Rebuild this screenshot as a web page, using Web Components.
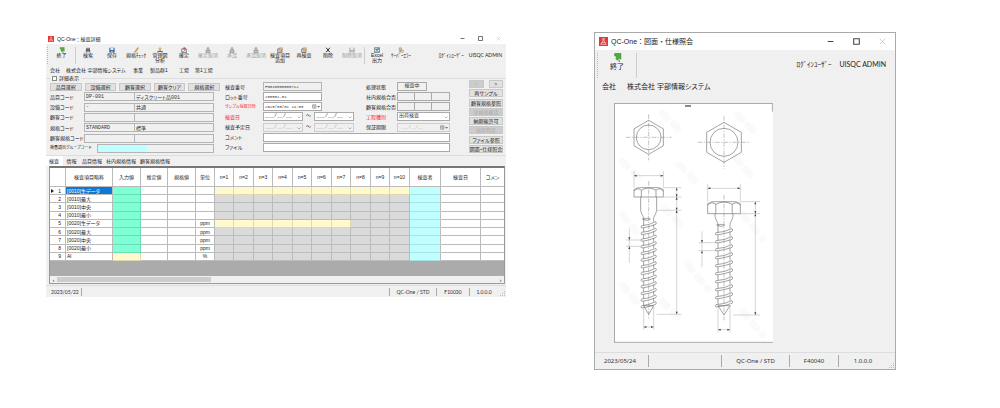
<!DOCTYPE html>
<html lang="ja">
<head>
<meta charset="utf-8">
<title>QC-One</title>
<style>
body{margin:0;background:#fff;color:#222;font-family:"Liberation Sans","Noto Sans CJK JP",sans-serif;font-feature-settings:"palt"}
</style>
</head>
<body>
<qc-desktop></qc-desktop>
<script>
const define=(name,html,setup)=>customElements.define(name,class extends HTMLElement{
  connectedCallback(){
    if(this.shadowRoot)return;
    const root=this.attachShadow({mode:'open'});
    const t=document.createElement('template');
    t.innerHTML=typeof html==='function'?html(this):html;
    root.append(t.content.cloneNode(true));
    if(setup)setup(this,root);
  }
});

/* Icons used on the tool bars, all on a 16 x 16 box */
const ICONS={
  exit:'<path d="M3 1h11v10l-3-2-3 4-3-3 2-3-4-2z" fill="#4cae3c" stroke="#2f7d28"/><path d="M11 12v4" stroke="#777" stroke-width="2"/>',
  find:'<path d="M4 2h3v4h2V2h3l2 8v4H9v-4H7v4H2v-4z" fill="#555"/><path d="M4 11h2M10 11h2" stroke="#ddd" stroke-width="2"/>',
  save:'<path d="M1 2h14v13H1z" fill="#3c5fa8"/><path d="M4 2h8v6H4z" fill="#e8eef8"/><path d="M5 11h6v4H5z" fill="#bbb"/>',
  check:'<path d="M13 1l2 2-7 9-3 1 1-3z" fill="#e5a63a" stroke="#a86b22"/><path d="M2 14h11" stroke="#888"/>',
  chart:'<path d="M8 1l4 4-4 4-4-4z" fill="#eec36c" stroke="#96723a"/><path d="M8 9v3M2 15v-3h12v3" fill="none" stroke="#333" stroke-width="2"/>',
  confirm:'<path d="M2 5h12v10H2z" fill="#fff" stroke="#555" stroke-width="2"/><circle cx="9" cy="4" r="3.500" fill="#df4b42"/><path d="M4 10l3 3 5-6" fill="none" stroke="#46689d" stroke-width="2"/>',
  stamp:'<circle cx="8" cy="4" r="3" fill="#bbb" stroke="#888"/><path d="M3 8h10v7H3z" fill="#c8c8c8" stroke="#888" stroke-width="2"/>',
  item:'<path d="M2 5h11v10H2z" fill="#eee" stroke="#555" stroke-width="2"/><path d="M6 2h8v6H6z" fill="#ebb765" stroke="#a67730"/><path d="M5 11h6" stroke="#4a719c" stroke-width="2"/>',
  del:'<path d="M3 2l10 12M13 2L3 14" stroke="#222" stroke-width="2.500"/>',
  saveoff:'<path d="M1 2h14v13H1z" fill="#aaa"/><path d="M4 2h8v6H4z" fill="#eee"/><path d="M5 11h6v4H5z" fill="#ddd"/>',
  excel:'<path d="M1 2h14v13H1z" fill="#eaf2ee" stroke="#567" stroke-width="2"/><path d="M4 5l8 7M12 5l-8 7" stroke="#258b55" stroke-width="3"/><path d="M9 2h6v5H9z" fill="#5b9bc7"/>',
  error:'<path d="M3 2h6v7H3z" fill="#e6c27c" stroke="#8b7650"/><path d="M7 8h7v6H7z" fill="#ddd" stroke="#666"/><path d="M3 14l4-4" stroke="#666" stroke-width="2"/>'
};

define('qc-icon',el=>`<style>:host{display:block;width:1em;height:1em}svg{display:block;width:100%;height:100%}</style>
<svg viewBox="0 0 16 16" aria-hidden="true">${ICONS[el.getAttribute('name')]}</svg>`);

define('tool-item',el=>`<style>
:host{display:block;flex:0 0 var(--tool-w,24px);min-width:0}
button{display:flex;flex-direction:column;align-items:center;width:100%;border:0;padding:0;background:none;font:inherit;font-feature-settings:inherit;color:inherit;white-space:nowrap}
button:disabled{color:#999}
qc-icon{font-size:var(--icon,6px)}
span{display:block;line-height:var(--tool-lh,5px);text-align:center}
</style><button type="button" ${el.hasAttribute('off')?'disabled':''}><qc-icon name="${el.getAttribute('icon')}"></qc-icon><span><slot></slot></span></button>`);

define('app-window',el=>`<style>
:host{display:flex;flex-direction:column;min-width:0;background:#f0f0f0;font-size:var(--fs);line-height:var(--lh)}
header{display:flex;align-items:center;height:var(--title-h);background:#fff;padding:0 var(--pad-end) 0 var(--pad)}
.logo{width:var(--logo);height:var(--logo);margin-right:3px;display:block}
h1{font:inherit;font-feature-settings:normal;margin:0;flex:1;white-space:nowrap}
nav{display:flex;gap:var(--ctl-gap)}
nav button{border:0;background:none;padding:0;width:var(--ctl);height:var(--ctl);color:#444}
nav button:last-child{color:#bbb}
nav svg{display:block;width:100%;height:100%}
</style>
<header>
<svg class="logo" viewBox="0 0 16 16"><path d="M0 0h16v16H0z" fill="#e5383b"/><path d="M6 3h4M7 3v4l-4 6h10L9 7V3M5 10h6" fill="none" stroke="#fff" stroke-width="1"/></svg>
<h1>${el.getAttribute('heading')}</h1>
<nav>
<button type="button" aria-label="最小化"><svg viewBox="0 0 10 10"><path d="M1 5h8" stroke="currentColor" stroke-width="1.500"/></svg></button>
<button type="button" aria-label="最大化"><svg viewBox="0 0 10 10"><path d="M1 1h8v8H1z" fill="none" stroke="currentColor" stroke-width="1.500"/></svg></button>
<button type="button" aria-label="閉じる"><svg viewBox="0 0 10 10"><path d="M1 1l8 8M9 1L1 9" stroke="currentColor"/></svg></button>
</nav></header><slot></slot>`);

define('tool-bar',`<style>
:host{display:flex;align-items:flex-start;padding:3px 4px 0 1px;box-sizing:border-box;white-space:nowrap}
.grip{width:0;height:var(--sep-h);border-left:1px dotted #bbb;flex:none}
.user{margin-left:auto;display:flex;gap:var(--user-gap);align-self:flex-start;padding-top:var(--user-top);font-family:Lato,"Noto Sans CJK JP",sans-serif}
</style><i class="grip"></i><slot></slot><div class="user"><span>ﾛｸﾞｲﾝﾕｰｻﾞｰ</span><span>UISQC ADMIN</span></div>`);

define('tool-sep',`<style>:host{display:block;flex:none;width:0;height:var(--sep-h);border-left:1px solid #ccc}</style>`);

define('status-bar',el=>`<style>
:host{display:grid;align-items:center;border-top:1px solid #ddd;box-sizing:border-box;white-space:nowrap;color:#333}
span{height:var(--status-h);line-height:var(--status-h);border-left:1px solid #aaa;box-sizing:border-box;text-align:center}
span:first-of-type{border:0;text-align:left;padding-left:var(--status-pad)}
svg{align-self:end;justify-self:end}
</style>${el.getAttribute('items').split('|').map(t=>`<span>${t}</span>`).join('')}<svg width="6" height="6" viewBox="0 0 6 6"><path d="M4 0h1v1H4zM4 2h1v1H4zM2 2h1v1H2zM4 4h1v1H4zM2 4h1v1H2zM0 4h1v1H0z" fill="#bbb"/></svg>`);

const chev='<svg viewBox="0 0 8 8" aria-hidden="true"><path d="M1 3l3 3 3-3" fill="none" stroke="#777"/></svg>';
const cal='<svg class="cal" viewBox="0 0 14 8" aria-hidden="true"><path d="M1 1h6v6H1zM1 3h6M4 3v4" fill="none" stroke="#777"/><path d="M9 3h5l-2.500 3z" fill="#666"/></svg>';
const row=(id,label,a,b)=>`<div class="row"><label for="${id}">${label}</label><input id="${id}" class="flat" value="${a}"><input class="flat name" aria-label="${label}名" value="${b}"></div>`;
const pick=(id,off)=>`<span class="pick"><select id="${id}" aria-label="${id}" ${off?'disabled':''}><option>___/__/__</option></select>${chev}</span>`;

define('inspect-form',`<style>
:host{display:block;position:relative;border-top:1px solid #ddd;border-bottom:1px solid #ddd;padding:1px 3px 2px 4px}
*{box-sizing:border-box}
.legend{position:absolute;left:4px;top:-4px;display:flex;align-items:center;gap:2px;background:#f0f0f0;padding:0 2px}
.legend input{appearance:none;width:5px;height:5px;margin:0;border:1px solid #888;background:#fff}
.cols{display:grid;grid-template-columns:170fr 5fr 225fr 19fr 34fr;height:73px}
.cols>div{display:grid;min-width:0;align-content:space-between}
.left{padding:3px 0 0}
.mid{padding:2px 0 1px}
.mid{grid-column:3;grid-template-columns:38fr 91fr 12fr 31fr 53fr;align-items:center;grid-auto-rows:9px}
.mid>*{min-width:0}
.side{grid-column:5}
.btns{display:flex;gap:3px}
button{flex:1;height:8px;border:1px solid #c8c8c8;background:#e1e1e1;padding:0;font:inherit;font-feature-settings:inherit;line-height:6px;color:#222;white-space:nowrap;min-width:0;display:flex;justify-content:center;align-items:center}
button:disabled{color:#aaa;background:#ccc}
.row{display:grid;grid-template-columns:34fr 51fr 79fr;align-items:center;margin-right:6px}
.row>*{min-width:0}
.row.group{grid-template-columns:47fr 117fr}
.group span{display:flex;border:1px solid #b4b4b4}
.group input{width:43%;border:0;background:#c0ffff;height:7px}
label{white-space:nowrap}
.long{font-size:4px}
.red{color:#f22}
input,select,output{display:block;width:100%;min-width:0;height:9px;margin:0;padding:0 1px;border:1px solid #aaa;border-radius:0;background:#fff;color:#333;font:4px/7px "Liberation Mono","Noto Sans CJK JP",monospace;font-feature-settings:"palt";appearance:none}
.row input{font-size:5px}
.flat{background:#f0f0f0;border-color:#b4b4b4}
.name{border-left:0}
.half{width:65%}
.c4{grid-column:4}
.wide{grid-column:2/-1}
.pair{display:grid;grid-template-columns:40fr 11fr 40fr;text-align:center}
.pick{position:relative;display:block}
.pick svg{position:absolute;right:2px;top:3px;width:4px;height:4px}
.pick .cal{width:8px;height:5px;top:2px}
select{font-size:5px}
select:disabled,input:disabled{background:#f0f0f0;border-color:#ccc;color:#aaa;opacity:1}
.trio{display:grid;grid-template-columns:1fr 1fr 1fr}
output{background:#f0f0f0;text-align:center}
.trio output+output{border-left:0}
.state{width:57%;font-size:5px}
.pages{display:flex;gap:5px}
</style>
<div class="legend"><input type="checkbox" id="detail"><label for="detail">詳細表示</label></div>
<div class="cols">
<div class="left">
<div class="btns"><button type="button">品目選択</button><button type="button">設備選択</button><button type="button">顧客選択</button><button type="button">顧客クリア</button><button type="button">規格選択</button></div>
${row('item','品目コード','DP-001','ディスクリート品001')}
${row('equip','設備コード','-','共通')}
${row('cust','顧客コード','','')}
${row('spec','規格コード','STANDARD','標準')}
${row('cspec','顧客規格コード','','')}
<div class="row group"><label class="long" for="grp">検査項目グループコード</label><span><input id="grp"></span></div>
</div>
<div class="mid">
<label for="no">検査番号</label><input id="no" class="half flat" value="F0010000000712"><span class="c4">処理状態</span><output class="state">検査中</output>
<label for="lot">ロット番号</label><input id="lot" class="half" value="200501-01"><span class="c4">社内規格合否</span><span class="trio"><output></output><output></output><output></output></span>
<label for="sample" class="red long">サンプル採取日時</label><span class="pick half"><input id="sample" value="2020/05/01 14:00">${cal}</span><span class="c4">顧客規格合否</span><span class="trio"><output></output><output></output><output></output></span>
<label for="検査日開始" class="red">検査日</label><span class="pair">${pick('検査日開始')}<span>～</span>${pick('検査日終了')}</span><label for="kind" class="c4 red">工程種別</label><span class="pick"><select id="kind"><option>出荷検査</option></select>${chev}</span>
<label for="予定日開始">検査予定日</label><span class="pair">${pick('予定日開始',1)}<span>～</span>${pick('予定日終了',1)}</span><label for="limit" class="c4">保証期限</label><span class="pick"><input id="limit" disabled value=" ___/__/__">${cal}</span>
<label for="comment">コメント</label><input id="comment" class="wide">
<label for="file">ファイル</label><input id="file" class="wide">
</div>
<div class="side">
<div class="pages"><button type="button" disabled>&lt;</button><button type="button">&gt;</button></div>
<button type="button">再サンプル</button><button type="button">顧客規格参照</button><button type="button" disabled>全規格確認</button><button type="button">納期後許可</button><button type="button" disabled>出荷判定</button><button type="button">ファイル参照</button><button type="button">図面・仕様照会</button>
</div>
</div>`);

define('tab-strip',el=>`<style>
:host{display:flex;height:10px;line-height:9px;white-space:nowrap}
button{border:0;padding:0 2px;min-width:17px;background:none;font:inherit;font-feature-settings:inherit;color:#222}
button[aria-selected=true]{background:#fff;padding:0 4px 0 3px}
</style>${el.getAttribute('tabs').split('|').map((t,i)=>`<button type="button" role="tab" aria-selected="${!i}">${t}</button>`).join('')}`);

const WIDTHS=[16,47,28,27,28,19,19,20,19,20,19,20,19,20,19,20,31,40,24];
const HEADS=['','検査項目略称','入力値','推定値','規格値','単位',...Array.from({length:10},(_,i)=>'n='+(i+1)),'検査者','検査日','コメン'];
const NAMES=['[0010]生データ','[0010]最大','[0010]中央','[0010]最小','[0020]生データ','[0020]最大','[0020]中央','[0020]最小','Al'];
define('data-grid',()=>`<style>
:host{display:block;border:1px solid #999;border-top:2px solid #777;background:#ababab;margin:0 1px 0 3px;overflow:hidden}
table{width:100%;height:93px;table-layout:fixed;border-collapse:separate;border-spacing:0;background:#fff}
th,td{padding:0;border:solid #bbb;border-width:0 1px 1px 0;box-sizing:border-box;font-weight:400;line-height:6px;height:8px;white-space:nowrap;overflow:hidden;text-align:center}
thead th{height:19px}
tbody th{text-align:right;padding-right:4px}
svg{width:3px;height:4px;margin-right:4px}
td:nth-child(2){text-align:left;padding-left:1px}
.sel{background:#0f78d4;color:#fff}
.g{background:#7fffd4;border-color:#6fdcb8}.y{background:#fffacd;border-color:#ddd8b0}.d{background:#dadada}.c{background:#c0ffff;border-bottom-color:#a8e4e4}
.void{height:15px}
.bar{display:flex;align-items:center;height:7px;background:#f0f0f0}
.bar i{display:block;width:34%;height:5px;background:#cdcdcd}
.bar b{width:7px;text-align:center;font-weight:400;line-height:6px}
.bar b:last-child{margin-left:auto}
</style><table><colgroup>${WIDTHS.map(w=>`<col style="width:${w}px">`).join('')}</colgroup>
<thead><tr>${HEADS.map(h=>`<th scope="col">${h}</th>`).join('')}</tr></thead>
<tbody>${NAMES.map((n,r)=>{
 const live=r===0?10:r===4?7:0;
 return `<tr><th scope="row">${r?'':'<svg viewBox="0 0 3 4"><path d="M0 0l3 2-3 2z" fill="#222"/></svg>'}${r+1}</th><td class="${r?'':'sel'}">${n}</td><td class="${r===8?'y':'g'}"></td><td></td><td></td><td>${r>3?(r===8?'%':'ppm'):''}</td>${Array.from({length:10},(_,i)=>`<td class="${i<live?'y':'d'}"></td>`).join('')}<td class="c"></td><td></td><td></td></tr>`}).join('')}</tbody></table>
<div class="void"></div><div class="bar"><b>‹</b><i></i><b>›</b></div>`);

/* One wood screw: hexagon from above, side view with thread, dimension lines */
const screw=s=>{
  const {x,hy,hr,cr,top,head,w,sw,core,tw,neck,t0,pitch,n,tip,end,dimY,rx,ticks,lx,ly,by,a}=s;
  const hw=Math.round(hr*.87);
  let p='';
  for(let i=0;i<n;i++){const y=t0+i*pitch;
    p+=`M${x-tw} ${y+8}q${tw} -1 ${tw*2} -12q4 4 0 8q${-tw} 9 ${-tw*2} 11q-4 -2 0 -7z`;
    if(i<n-1)p+=`M${x-core} ${y+15}V${y+pitch+7}M${x+core} ${y+5}V${y+pitch-4}`;}
  const ar=(X,Y,dx,dy)=>`M${X} ${Y}l${dx*8-dy*3} ${dy*8-dx*3}l${dy*6} ${dx*6}z`;
  let arrows=ar(x-w,dimY,1,0)+ar(x+w,dimY,-1,0)+ar(x-core,by,1,0)+ar(x+core,by,-1,0)+ar(lx,ly[0],0,-1)+ar(lx,ly[1],0,1);
  for(let i=0;i<ticks.length-1;i++)arrows+=ar(rx,ticks[i],0,1)+ar(rx,ticks[i+1],0,-1);
  return `<g fill="none" stroke="#666" stroke-width="1.800">
<path d="M${x} ${hy-hr}l${hw} ${hr/2}v${hr}l${-hw} ${hr/2}l${-hw} ${-hr/2}v${-hr}z"/><circle cx="${x}" cy="${hy}" r="${cr}"/>
<path d="M${x-w} ${head}V${top+6}q${w*.25} -8 ${w*.5} -6h${w}q${w*.25} -2 ${w*.5} 6V${head}zM${x-w*.5} ${head}V${top+8}q${w*.5} -14 ${w} 0V${head}M${x-w} ${top+10}q${w*.25} -12 ${w*.5} -2M${x+w} ${top+10}q${-w*.25} -12 ${-w*.5} -2"/>
<path d="M${x-sw} ${head}v${neck-head-22}q2 10 ${sw-core} 22V${t0+8}M${x+sw} ${head}v${neck-head-22}q-2 10 ${core-sw} 22V${t0-4}M${x-core-4} ${neck+4}q16 8 24 0q-8 -4 -24 0"/>
<path d="${p}"/><path d="M${x-core} ${tip}L${x} ${end}L${x+core} ${tip}z"/></g>
<g fill="none" stroke="#aaa" stroke-width="1.500">
<path stroke-dasharray="14 4 4 4" stroke="#888" d="M${x-a} ${hy}H${x+a}M${x} ${hy-a}V${hy+a}M${x} ${top-20}V${end+16}"/>
<path d="M${x-w} ${dimY}H${x+w}M${x-w} ${dimY-14}V${top}M${x+w} ${dimY-14}V${top}M${rx} ${ticks[0]}V${end}M${lx} ${ly[0]-34}V${ly[1]+50}M${lx-10} ${ly[0]}H${x-tw}M${lx-10} ${ly[1]}H${x-tw}M${x-core} ${tip}V${by+8}M${x+core} ${tip}V${by+8}M${x-core} ${by}H${x+core}"/>
<path d="${ticks.map((t,i)=>`M${i<2?x+w:x+sw} ${t}H${rx+14}`).join('')}"/></g><path d="${arrows}" fill="#444"/>`;
};
define('screw-drawing',()=>`<style>:host{display:block}svg{display:block;width:100%}</style>
<svg viewBox="14 14 477 720" role="img" aria-label="六角コーチスクリュー">
<path fill="#fff" d="M14 14h477v720H14z"/>
<g stroke="#fafafa" stroke-width="22" stroke-linecap="round" stroke-dasharray="18 28"><path d="M160 45l60 60M385 50l60 60M40 190l60 60M210 200l60 60M380 180l50 60M165 330l60 60M40 350l40 50M400 350l60 70M235 500l60 70M40 560l50 60M160 610l60 60M400 640l60 70"/></g>
${screw({x:118,hy:117,hr:51,cr:37,top:268,head:296,w:44,sw:24,core:15,tw:21,neck:358,t0:374,pitch:20,n:13,tip:622,end:648,dimY:232,rx:202,ticks:[268,296,336,648],lx:60,ly:[425,444],by:686,a:69})}
${screw({x:344,hy:132,hr:60,cr:42,top:310,head:346,w:49,sw:27,core:18,tw:24,neck:376,t0:395,pitch:24,n:10,tip:622,end:650,dimY:270,rx:438,ticks:[310,346,650],lx:278,ly:[433,457],by:694,a:79})}
<path d="M15 734V15H490" fill="none" stroke="#999" stroke-width="3"/><path d="M14 732H491M489 14V40" stroke="#aaa" stroke-width="3"/><path d="M227 23h18" stroke="#555" stroke-width="4"/>
</svg>`);

define('qc-desktop',`<style>
:host{display:grid;grid-template-columns:46fr 460fr 88fr 302fr 104fr;align-items:start;padding-top:32px}
.a{grid-column:2;margin-top:1px;--fs:5px;--lh:6px;--title-h:11px;--pad:2px;--pad-end:5px;--logo:6px;--ctl:5px;--ctl-gap:13px;--sep-h:17px;--user-gap:5px;--user-top:5px;--status-h:8px;--status-pad:5px}
.b{grid-column:4;border:1px solid #aaa;box-sizing:border-box;--fs:7px;--lh:9px;--title-h:17px;--pad:4px;--pad-end:9px;--logo:9px;--ctl:7px;--ctl-gap:19px;--sep-h:25px;--user-gap:8px;--user-top:7px;--status-h:12px;--status-pad:9px;--tool-w:38px;--icon:9px;--tool-lh:9px}
.a tool-bar{height:20px}
.b tool-bar{height:31px;padding-right:9px;padding-left:2px}
.first{flex-basis:27px}
.org{display:grid;white-space:nowrap;margin:0}
.a .org{grid-template-columns:16fr 67fr 17fr 29fr 16fr 307fr;padding:3px 4px 5px}
.b .org{grid-template-columns:25fr 261fr;padding:1px 7px 12px}
screw-drawing{width:53%;margin:0 0 9px 19px}
.a status-bar{grid-template-columns:35fr 308fr 47fr 33fr 29fr 8fr;height:12px;margin-top:1px;font-family:Lato,sans-serif}
.b status-bar{grid-template-columns:53fr 73fr 68fr 49fr 49fr 8fr;height:17px;font-family:"Noto Sans",sans-serif;font-size:6px}
</style>
<app-window class="a" heading="QC-One：検査詳細">
<tool-bar>
<tool-item class="first" icon="exit">終了</tool-item><tool-sep></tool-sep>
<tool-item icon="find">検索</tool-item><tool-item icon="save">保存</tool-item><tool-item icon="check">規格ﾁｪｯｸ</tool-item><tool-item icon="chart">管理図<br>分析</tool-item><tool-item icon="confirm">確定</tool-item><tool-item off icon="stamp">確定取消</tool-item><tool-item off icon="stamp">承認</tool-item><tool-item off icon="stamp">承認取消</tool-item><tool-item icon="item">検査項目<br>追加</tool-item><tool-item icon="item">再検査</tool-item><tool-item icon="del">削除</tool-item><tool-item off icon="saveoff">削除取消</tool-item><tool-sep></tool-sep>
<tool-item icon="excel">Excel<br>出力</tool-item><tool-item icon="error">ｻｰﾊﾞｰｴﾗｰ</tool-item>
</tool-bar>
<p class="org"><span>会社</span><span>株式会社 宇部情報システム</span><span>事業</span><span>製品群1</span><span>工場</span><span>第1工場</span></p>
<inspect-form></inspect-form>
<tab-strip tabs="検査|情報|品目情報|社内規格情報|顧客規格情報"></tab-strip>
<data-grid></data-grid>
<status-bar items="2023/05/22||QC-One / STD|F10030|1.0.0.0"></status-bar>
</app-window>
<app-window class="b" heading="QC-One：図面・仕様照会">
<tool-bar><tool-item icon="exit">終了</tool-item><tool-sep></tool-sep></tool-bar>
<p class="org"><span>会社</span><span>株式会社 宇部情報システム</span></p>
<screw-drawing></screw-drawing>
<status-bar items="2023/05/24||QC-One / STD|F40040|1.0.0.0"></status-bar>
</app-window>`);
</script>
</body>
</html>
